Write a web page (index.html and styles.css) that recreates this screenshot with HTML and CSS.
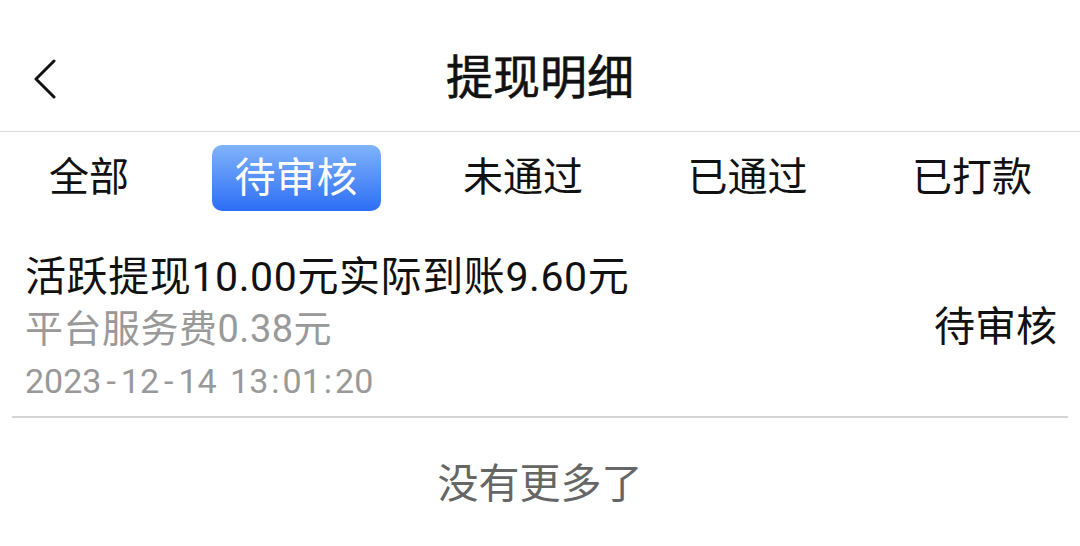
FILE: index.html
```html
<!DOCTYPE html>
<html lang="zh-CN">
<head>
<meta charset="utf-8">
<title>提现明细</title>
<link rel="stylesheet" href="styles.css">
</head>
<body>
<header class="header">
  <button class="back" aria-label="返回">
    <svg width="28" height="40" viewBox="0 0 28 40"><path d="M22 2 L4 20 L22 38" fill="none" stroke="#111" stroke-width="3" stroke-linecap="round" stroke-linejoin="round"/></svg>
  </button>
  <h1 class="title">提现明细</h1>
</header>
<nav class="tabs">
  <span class="tab">全部</span>
  <span class="tab active">待审核</span>
  <span class="tab">未通过</span>
  <span class="tab">已通过</span>
  <span class="tab">已打款</span>
</nav>
<section class="list">
  <div class="item">
    <div class="info">
      <div class="main">活跃提现10.00元实际到账9.60元</div>
      <div class="fee">平台服务费0.38元</div>
      <div class="date">2023<span class="dash">-</span>12<span class="dash">-</span>14 13<span class="colon">:</span>01<span class="colon">:</span>20</div>
    </div>
    <div class="status">待审核</div>
  </div>
</section>
<div class="more">没有更多了</div>
</body>
</html>
```
FILE: styles.css
```css
* { box-sizing: border-box; }
body {
  margin: 0;
  background: #fff;
  font-family: "Roboto", "Noto Sans CJK SC", "Noto Sans", sans-serif;
  color: #111;
}
.header {
  position: relative;
  height: 132px;
  border-bottom: 1px solid #dcdcdc;
  display: flex;
  align-items: flex-start;
  justify-content: center;
  padding-top: 48px;
}
.back {
  position: absolute;
  left: 32px;
  top: 59px;
  padding: 0;
  border: 0;
  background: none;
  line-height: 0;
}
.title {
  margin: 0;
  font-size: 47px;
  font-weight: 400;
  -webkit-text-stroke: 0.6px #111;
  line-height: 60px;
  color: #111;
}
.tabs {
  display: flex;
  justify-content: space-between;
  align-items: flex-start;
  padding: 13px 26px 0 27px;
  height: 98px;
}
.tab {
  font-size: 40px;
  line-height: 66px;
  height: 66px;
  padding: 0 22px;
  border-radius: 10px;
  color: #111;
}
.tab.active {
  font-size: 41px;
  padding: 0 23px;
  color: #fff;
  background: linear-gradient(to bottom, #80b3fb, #2c6ef5);
}
.list {
  padding: 21px 12px 0;
}
.item {
  display: flex;
  align-items: center;
  justify-content: space-between;
  padding: 0 11px 9px 13px;
  border-bottom: 2px solid #d6d6d6;
}
.main {
  font-size: 41px;
  letter-spacing: 0.6px;
  line-height: 52px;
  color: #111;
}
.fee {
  font-size: 38px;
  letter-spacing: 0.5px;
  line-height: 52px;
  color: #999;
}
.date {
  font-size: 34px;
  line-height: 52px;
  word-spacing: 5px;
  color: #999;
}
.dash {
  margin: 0 5px;
}
.colon {
  margin: 0 3px;
}
.status {
  font-size: 41px;
  line-height: 52px;
  color: #111;
  margin-top: -4px;
}
.more {
  text-align: center;
  font-size: 41px;
  line-height: 52px;
  color: #666;
  padding-top: 40px;
}
```
